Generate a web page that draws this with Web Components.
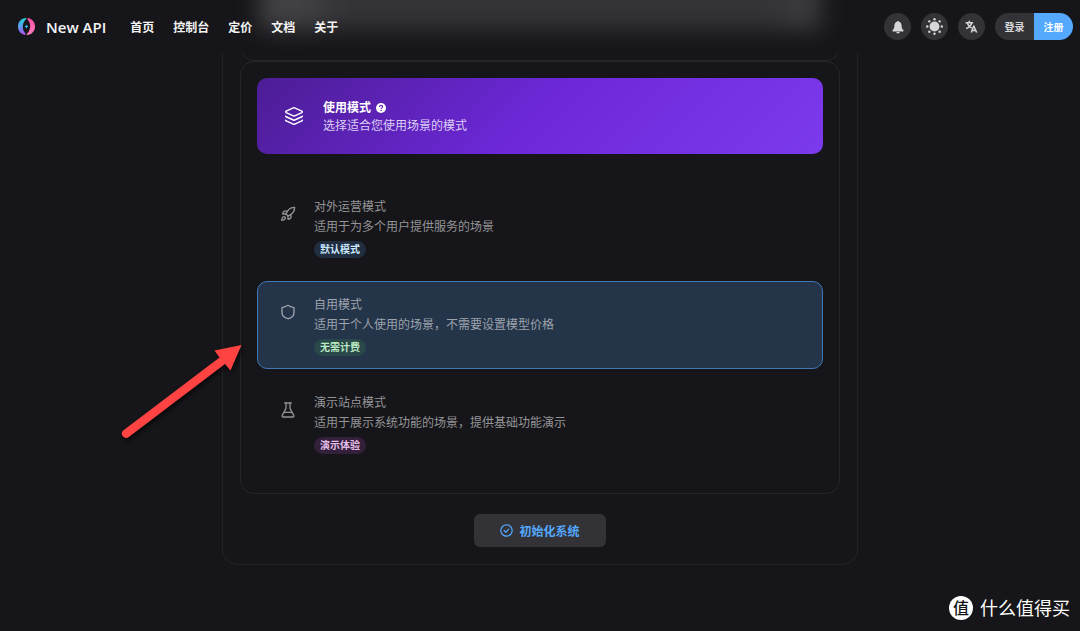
<!DOCTYPE html>
<html lang="zh-CN">
<head>
<meta charset="utf-8">
<meta name="viewport" content="width=device-width, initial-scale=1">
<title>New API</title>
<style>
  :root {
    --bg: #16161a;
    --fill: #333337;
    --line: #26262a;
    --blue: #54a9ff;
  }
  body {
    margin: 0;
    background: var(--bg);
    color: #f4f4f5;
    font-family: "Open Sans", "Noto Sans CJK SC", sans-serif;
    font-size: 12px;
  }
</style>
</head>
<body>
  <app-page></app-page>

<script>
// icon bodies, all drawn on a 24x24 grid
const ICONS = {
  logo: `
    <defs>
      <linearGradient id="l" x1="0" y1="0" x2="0" y2="1"><stop offset="0" stop-color="#1fd3d6"/><stop offset=".5" stop-color="#5b9df0"/><stop offset="1" stop-color="#b14df0"/></linearGradient>
      <linearGradient id="r" x1="0" y1="0" x2="0" y2="1"><stop offset="0" stop-color="#ff4fa3"/><stop offset="1" stop-color="#ff7fc0"/></linearGradient>
    </defs>
    <path fill="url(#l)" d="M11.500 0C4.500.300 0 5.600 0 12c0 5.800 3.800 10.600 9.500 12C11 23.500 11 22.500 10 21.300 7.800 18.800 6.500 15.500 6.800 11.500 7.100 7.500 8.800 4 11.500 1.500 12.200.800 12.200 0 11.500 0z"/>
    <path fill="url(#r)" d="M12.500 24C19.500 23.700 24 18.400 24 12 24 6.200 20.200 1.400 14.500 0 13 .500 13 1.500 14 2.700c2.200 2.500 3.500 5.800 3.200 9.800-.3 4-2 7.500-4.700 10-.7.700-.7 1.500 0 1.500z"/>
    <path fill="#2fb4e8" d="M12 9l.9 2.100L15 12l-2.100.900L12 15l-.9-2.100L9 12l2.100-.9z"/>`,
  bell: `<path fill="currentColor" d="M12 1.500c-1 0-1.700.7-1.800 1.600C7.500 4 6 6.300 5.800 9.500 5.500 14 5 15.500 2.800 17.200c-.9.800-.5 2.300.8 2.300h16.800c1.300 0 1.700-1.500.8-2.300C19 15.500 18.500 14 18.200 9.500 18 6.300 16.500 4 13.800 3.100 13.700 2.200 13 1.500 12 1.500zM9 20.500a3 2.500 0 0 0 6 0z"/>`,
  sun: `<g fill="currentColor"><circle cx="12" cy="12" r="7"/><circle cx="12" cy="1.700" r="1.700"/><circle cx="12" cy="22.300" r="1.700"/><circle cx="1.700" cy="12" r="1.700"/><circle cx="22.300" cy="12" r="1.700"/><circle cx="4.700" cy="4.700" r="1.700"/><circle cx="19.300" cy="4.700" r="1.700"/><circle cx="4.700" cy="19.300" r="1.700"/><circle cx="19.300" cy="19.300" r="1.700"/></g>`,
  language: `<g fill="none" stroke="currentColor" stroke-width="2.800" stroke-linejoin="round"><path d="M1 5h14M8 1.500V5M12.500 5C11 10.500 7 14 2 16M4 5.500c1.500 4 4.500 7.500 8.500 9.500"/><path d="M11.500 23l4.700-12 5.300 12M13 19.500h7.500"/></g>`,
  layers: `<g fill="none" stroke="currentColor" stroke-width="1.800" stroke-linecap="round" stroke-linejoin="round"><path d="M12.800 2.200a2 2 0 0 0-1.600 0L2.600 6.100a1 1 0 0 0 0 1.800l8.600 3.900a2 2 0 0 0 1.600 0l8.600-3.900a1 1 0 0 0 0-1.800z"/><path d="M2 12.200a1 1 0 0 0 .6.700l8.600 3.900a2 2 0 0 0 1.600 0l8.600-3.900a1 1 0 0 0 .6-.7M2 17.200a1 1 0 0 0 .6.700l8.600 3.900a2 2 0 0 0 1.600 0l8.600-3.900a1 1 0 0 0 .6-.7"/></g>`,
  help: `<circle cx="12" cy="12" r="12" fill="currentColor"/><path d="M8.300 9.300c0-2.200 1.600-3.600 3.800-3.600s3.800 1.300 3.800 3.300c0 2.600-3.700 2.800-3.700 5.300" fill="none" stroke="#5b21b6" stroke-width="2.600"/><circle cx="12.200" cy="18" r="1.700" fill="#5b21b6"/>`,
  rocket: `<g fill="none" stroke="currentColor" stroke-width="2" stroke-linecap="round" stroke-linejoin="round"><path d="M4.500 16.500c-1.500 1.300-2 5-2 5s3.700-.5 5-2c.7-.8.700-2.100-.1-2.900a2.200 2.200 0 0 0-2.900-.1z"/><path d="M12 15l-3-3a22 22 0 0 1 2-4A12.900 12.900 0 0 1 22 2c0 2.700-.8 7.500-6 11a22 22 0 0 1-4 2z"/><path d="M9 12H4s.6-3 2-4c1.600-1.100 5 0 5 0M12 15v5s3-.6 4-2c1.100-1.600 0-5 0-5"/></g>`,
  shield: `<path fill="none" stroke="currentColor" stroke-width="2" stroke-linejoin="round" d="M21 13c0 5-3.500 7.500-8.300 9a1 1 0 0 1-.7 0C7 20.500 3 18 3 13V6a1 1 0 0 1 1-1c2 0 4.700-1.200 7.200-2.700a1.200 1.200 0 0 1 1.500 0C15 3.800 18 5 20 5a1 1 0 0 1 1 1z"/>`,
  flask: `<g fill="none" stroke="currentColor" stroke-width="1.900" stroke-linecap="round" stroke-linejoin="round"><path d="M7 1.500h10M9 1.500v8L3.200 20.500a1.500 1.500 0 0 0 1.300 2h15a1.500 1.500 0 0 0 1.300-2L15 9.500v-8M6.500 15.500h11"/></g>`,
  check: `<g fill="none" stroke="currentColor" stroke-width="2.200" stroke-linecap="round" stroke-linejoin="round"><circle cx="12" cy="12" r="10.500"/><path d="M7.500 12l3.200 3.200 5.500-5.700"/></g>`
};

const MODES = [
  { value: 'external', icon: 'rocket', title: '对外运营模式', text: '适用于为多个用户提供服务的场景', tag: '默认模式', tone: 'blue' },
  { value: 'self', icon: 'shield', title: '自用模式', text: '适用于个人使用的场景，不需要设置模型价格', tag: '无需计费', tone: 'green', checked: true },
  { value: 'demo', icon: 'flask', title: '演示站点模式', text: '适用于展示系统功能的场景，提供基础功能演示', tag: '演示体验', tone: 'purple' }
];

// Small base: attaches the shadow root and fills it from render()
class BaseElement extends HTMLElement {
  constructor() {
    super();
    this.attachShadow({ mode: 'open' });
  }
  connectedCallback() {
    const template = document.createElement('template');
    template.innerHTML = this.render();
    this.shadowRoot.replaceChildren(template.content.cloneNode(true));
  }
}

class UiIcon extends BaseElement {
  render() {
    return `
      <style>
        :host { display: block; flex: none; width: 16px; height: 16px; }
        svg { display: block; width: 100%; height: 100%; }
      </style>
      <svg viewBox="0 0 24 24" aria-hidden="true">${ICONS[this.getAttribute('name')]}</svg>`;
  }
}

class UiTag extends BaseElement {
  render() {
    return `
      <style>
        :host {
          display: inline-block;
          padding: 0 6px;
          border-radius: 9px;
          font-size: 10px;
          font-weight: 600;
          line-height: 17px;
          background: #202e3f;
          color: #cbe7fe;
        }
        :host([tone="green"]) { background: #2a4749; color: #b9e8c0; }
        :host([tone="purple"]) { background: #33203a; color: #e6bdea; }
      </style>
      <slot></slot>`;
  }
}

class AppHeader extends BaseElement {
  render() {
    return `
      <style>
        :host { display: block; position: sticky; top: 0; z-index: 2; }
        header {
          position: relative;
          display: flex;
          align-items: center;
          height: 53px;
          padding: 0 7px 0 18px;
          background: var(--bg);
          overflow: hidden;
        }
        /* soft trace of the form field scrolled under the bar */
        header::before {
          content: "";
          position: absolute;
          top: -60px;
          left: 50%;
          width: 562px;
          height: 90px;
          transform: translateX(-50%);
          background: linear-gradient(90deg, #414144, #414144 50px, #343438 80px, #343438 calc(100% - 50px), #3b3b3e calc(100% - 20px));
          filter: blur(11px);
        }
        header > * { position: relative; }
        .brand, nav, .tools { display: flex; align-items: center; }
        .brand { gap: 11px; font-size: 15px; font-weight: 600; }
        .brand ui-icon { width: 17px; height: 17px; }
        nav { gap: 19px; margin-left: 24px; font-weight: 700; }
        a { color: inherit; text-decoration: none; white-space: nowrap; }
        .tools { gap: 10px; margin-left: auto; }
        button {
          display: flex;
          align-items: center;
          justify-content: center;
          height: 27px;
          padding: 0;
          border: 0;
          background: var(--fill);
          color: #d6d6d8;
          font: inherit;
          font-size: 10px;
          font-weight: 700;
          cursor: pointer;
        }
        .round { width: 27px; border-radius: 50%; }
        .round ui-icon { width: 14px; height: 14px; }
        .round ui-icon[name="sun"] { width: 17px; height: 17px; }
        .round ui-icon[name="language"] { width: 13px; height: 13px; }
        .account { display: flex; border-radius: 14px; overflow: hidden; }
        .account button { width: 39px; }
        .account .primary { background: var(--blue); color: #fff; }
      </style>
      <header>
        <a class="brand" href="#"><ui-icon name="logo"></ui-icon>New API</a>
        <nav>
          <a href="#home">首页</a>
          <a href="#console">控制台</a>
          <a href="#pricing">定价</a>
          <a href="#docs">文档</a>
          <a href="#about">关于</a>
        </nav>
        <div class="tools">
          <button class="round" aria-label="通知"><ui-icon name="bell"></ui-icon></button>
          <button class="round" aria-label="主题"><ui-icon name="sun"></ui-icon></button>
          <button class="round" aria-label="语言"><ui-icon name="language"></ui-icon></button>
          <div class="account">
            <button>登录</button>
            <button class="primary">注册</button>
          </div>
        </div>
      </header>`;
  }
}

class ModeBanner extends BaseElement {
  render() {
    return `
      <style>
        :host {
          display: flex;
          align-items: center;
          gap: 19px;
          padding: 19px 27px;
          border-radius: 10px;
          background: linear-gradient(135deg, #4c1d95 0%, #6d28d9 50%, #7c3aed 100%);
          line-height: 18px;
          color: #fff;
        }
        ui-icon { width: 20px; height: 20px; }
        .copy { padding-top: 2px; }
        .title { display: flex; align-items: center; gap: 5px; font-weight: 600; }
        .title ui-icon { width: 10px; height: 10px; }
        .text { color: #dccff5; }
      </style>
      <ui-icon name="layers"></ui-icon>
      <div class="copy">
        <div class="title"><slot name="title"></slot><ui-icon name="help"></ui-icon></div>
        <div class="text"><slot></slot></div>
      </div>`;
  }
}

// The radios share one shadow root so that they stay in one group
class ModePicker extends BaseElement {
  render() {
    return `
      <style>
        :host { display: flex; flex-direction: column; gap: 10px; }
        label {
          display: flex;
          gap: 18px;
          padding: 13px 22px 12px;
          border: 1px solid transparent;
          border-radius: 10px;
          line-height: 20px;
          color: #949497;
          cursor: pointer;
        }
        label:has(:checked) {
          border-color: #3f78b5;
          background: #243449;
          color: #9ca3ad;
        }
        input { appearance: none; display: block; width: 16px; height: 0; margin: 0; }
        .mark { width: 16px; padding-top: 9px; }
        ui-tag { display: block; width: max-content; margin-top: 4px; }
      </style>
      ${MODES.map(mode => `
        <label>
          <span class="mark">
            <input type="radio" name="mode" value="${mode.value}" ${mode.checked ? 'checked' : ''}>
            <ui-icon name="${mode.icon}"></ui-icon>
          </span>
          <span>
            <div>${mode.title}</div>
            <div>${mode.text}</div>
            <ui-tag tone="${mode.tone}">${mode.tag}</ui-tag>
          </span>
        </label>`).join('')}`;
  }
}

class SubmitButton extends BaseElement {
  render() {
    return `
      <style>
        :host { display: flex; justify-content: center; }
        button {
          display: flex;
          align-items: center;
          gap: 6px;
          height: 33px;
          padding: 0 26px;
          border: 0;
          border-radius: 6px;
          background: var(--fill);
          color: var(--blue);
          font: inherit;
          font-weight: 600;
          cursor: pointer;
        }
        ui-icon { width: 13px; height: 13px; }
      </style>
      <button type="submit"><ui-icon name="check"></ui-icon><slot></slot></button>`;
  }
}

class PointerArrow extends BaseElement {
  render() {
    return `
      <style>
        :host { display: block; pointer-events: none; filter: drop-shadow(1px 3px 2px rgba(0, 0, 0, .6)); }
        svg { display: block; width: 122px; height: 96px; }
      </style>
      <svg viewBox="0 0 122 96" aria-hidden="true">
        <path fill="#ff4343" d="M120.500 0L93.500 5.500l5 7L2.500 85.200a4.300 4.300 0 0 0 5.300 6.800L104 19l5.500 6.500z"/>
      </svg>`;
  }
}

class SiteMark extends BaseElement {
  render() {
    return `
      <style>
        :host { display: flex; align-items: center; gap: 7px; font-size: 18px; line-height: 24px; color: #fff; }
        b {
          width: 24px;
          border-radius: 50%;
          background: #fff;
          color: #111;
          font-size: 16px;
          font-weight: 500;
          text-align: center;
        }
      </style>
      <b>值</b><span>什么值得买</span>`;
  }
}

class AppPage extends BaseElement {
  render() {
    return `
      <style>
        :host { display: block; position: relative; min-height: 100vh; overflow: clip; }
        main {
          box-sizing: border-box;
          max-width: 636px;
          margin: -32px auto 0;
          padding: 0 17px 17px;
          border: 1px solid #222226;
          border-top: 0;
          border-radius: 0 0 16px 16px;
        }
        section { border: 1px solid var(--line); border-radius: 14px; }
        .previous { height: 38px; }
        .usage { padding: 16px 16px 26px; }
        mode-picker { margin-top: 29px; }
        submit-button { margin-top: 20px; }
        pointer-arrow { position: absolute; top: 345px; right: calc(50% + 297px); }
        site-mark { position: absolute; right: 10px; bottom: 11px; }
      </style>
      <app-header></app-header>
      <main>
        <section class="previous"></section>
        <section class="usage">
          <mode-banner><span slot="title">使用模式</span>选择适合您使用场景的模式</mode-banner>
          <mode-picker></mode-picker>
        </section>
        <submit-button>初始化系统</submit-button>
      </main>
      <pointer-arrow></pointer-arrow>
      <site-mark></site-mark>`;
  }
}

customElements.define('ui-icon', UiIcon);
customElements.define('ui-tag', UiTag);
customElements.define('app-header', AppHeader);
customElements.define('mode-banner', ModeBanner);
customElements.define('mode-picker', ModePicker);
customElements.define('submit-button', SubmitButton);
customElements.define('pointer-arrow', PointerArrow);
customElements.define('site-mark', SiteMark);
customElements.define('app-page', AppPage);
</script>
</body>
</html>
